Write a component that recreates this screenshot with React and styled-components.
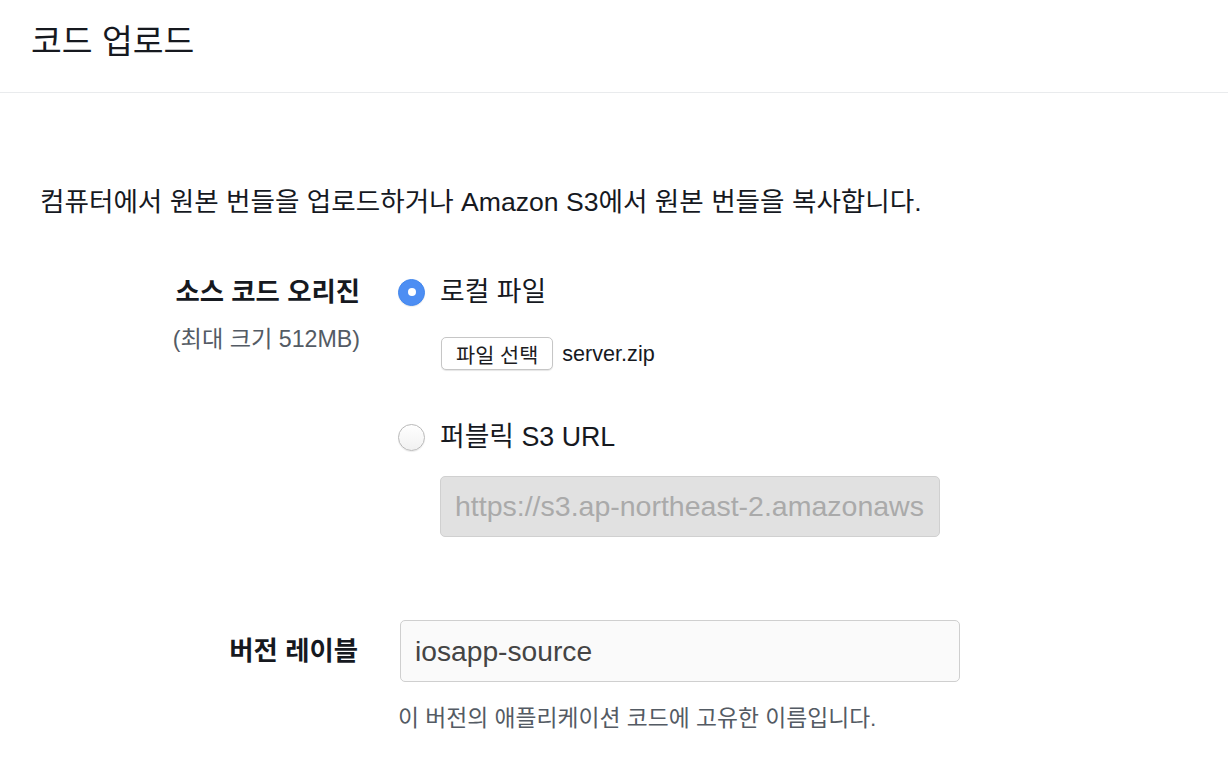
import styled, { createGlobalStyle } from "styled-components";

const GlobalStyle = createGlobalStyle`
	body {
		margin: 0;
		background: #ffffff;
		font-family: "Liberation Sans", "Noto Sans CJK KR", sans-serif;
		color: #16191f;
	}
	* {
		box-sizing: border-box;
	}
`;

const App = () => {
	return (
		<>
			<GlobalStyle />
			<Page>
				<Header>
					<Title>코드 업로드</Title>
				</Header>
				<Body>
					<Description>
						컴퓨터에서 원본 번들을 업로드하거나 Amazon S3에서 원본 번들을 복사합니다.
					</Description>

					<FieldRow>
						<LabelCol>
							<Label>소스 코드 오리진</Label>
							<SubLabel>(최대 크기 512MB)</SubLabel>
						</LabelCol>
						<Controls>
							<RadioOption>
								<Radio checked />
								<OptionText>로컬 파일</OptionText>
							</RadioOption>
							<FileRow>
								<FileButton type="button">파일 선택</FileButton>
								<FileName>server.zip</FileName>
							</FileRow>
							<RadioOption $spaced>
								<Radio />
								<OptionText>퍼블릭 S3 URL</OptionText>
							</RadioOption>
							<UrlInput
								disabled
								placeholder="https://s3.ap-northeast-2.amazonaws.com/bucket/key"
							/>
						</Controls>
					</FieldRow>

					<FieldRow $version>
						<LabelCol $center>
							<Label>버전 레이블</Label>
						</LabelCol>
						<Controls $shift>
							<TextInput defaultValue="iosapp-source" />
							<Hint>이 버전의 애플리케이션 코드에 고유한 이름입니다.</Hint>
						</Controls>
					</FieldRow>
				</Body>
			</Page>
		</>
	);
};
export default App;

const Page = styled.div`
	width: 1228px;
	min-height: 784px;
	background: #ffffff;
`;

const Header = styled.div`
	height: 93px;
	padding: 22px 31px 0;
	border-bottom: 1px solid #e9ebed;
`;

const Title = styled.h1`
	margin: 0;
	font-size: 33.5px;
	line-height: 40px;
	font-weight: 400;
	color: #16191f;
`;

const Body = styled.div`
	padding: 0 0 40px 40px;
`;

const Description = styled.p`
	margin: 91px 0 0;
	font-size: 26.6px;
	line-height: 36px;
	color: #16191f;
`;

const FieldRow = styled.div`
	display: flex;
	gap: 38px;
	margin-top: ${(p) => (p.$version ? "83px" : "54px")};
`;

const LabelCol = styled.div`
	width: 320px;
	flex-shrink: 0;
	display: flex;
	flex-direction: column;
	align-items: flex-end;
	padding-top: ${(p) => (p.$center ? "13px" : "0")};
	padding-right: ${(p) => (p.$center ? "2px" : "0")};
`;

const Label = styled.div`
	font-size: 26.4px;
	line-height: 36px;
	font-weight: 700;
	color: #16191f;
`;

const SubLabel = styled.div`
	margin-top: 14px;
	font-size: 23.2px;
	line-height: 30px;
	color: #545b64;
`;

const Controls = styled.div`
	display: flex;
	flex-direction: column;
	align-items: flex-start;
	margin-left: ${(p) => (p.$shift ? "2px" : "0")};
`;

const RadioOption = styled.label`
	display: flex;
	align-items: center;
	gap: 15px;
	height: 36px;
	margin-top: ${(p) => (p.$spaced ? "49px" : "0")};
`;

const Radio = styled.span`
	width: 27px;
	height: 27px;
	border-radius: 50%;
	position: relative;
	flex-shrink: 0;
	background: ${(p) =>
		p.checked ? "#4d8ef3" : "linear-gradient(#ffffff, #f1f1f1)"};
	border: 1px solid ${(p) => (p.checked ? "#4287ee" : "#b9b9b9")};
	box-shadow: 0 1px 1px rgba(0, 0, 0, 0.08);

	&::after {
		content: "";
		display: ${(p) => (p.checked ? "block" : "none")};
		position: absolute;
		left: 50%;
		top: 50%;
		width: 8px;
		height: 8px;
		margin: -4px 0 0 -4px;
		border-radius: 50%;
		background: #ffffff;
	}
`;

const OptionText = styled.span`
	font-size: 26.8px;
	line-height: 36px;
	color: #16191f;
`;

const FileRow = styled.div`
	display: flex;
	align-items: center;
	gap: 9px;
	margin: 27px 0 0 43px;
`;

const FileButton = styled.button`
	height: 33px;
	padding: 0 14px;
	font-family: "Liberation Sans", "Noto Sans CJK KR", sans-serif;
	font-size: 20.8px;
	color: #1d1d1f;
	background: #ffffff;
	border: 1px solid #c6c6c6;
	border-radius: 5px;
	box-shadow: 0 1px 1px rgba(0, 0, 0, 0.1);
`;

const FileName = styled.span`
	font-size: 21.6px;
	color: #16191f;
`;

const UrlInput = styled.input`
	margin: 21px 0 0 42px;
	width: 500px;
	height: 61px;
	padding: 0 15px 0 14px;
	font-family: "Liberation Sans", sans-serif;
	font-size: 28.5px;
	background: #e1e1e1;
	border: 1px solid #d0d0d0;
	border-radius: 5px;
	outline: none;

	&::placeholder {
		color: #aaaaaa;
	}
`;

const TextInput = styled.input`
	width: 560px;
	height: 62px;
	padding: 0 14px;
	font-family: "Liberation Sans", sans-serif;
	font-size: 28.2px;
	color: #444444;
	background: #fafafa;
	border: 1px solid #cfcfcf;
	border-radius: 5px;
	outline: none;
`;

const Hint = styled.div`
	margin: 21px 0 0 -2px;
	font-size: 22.8px;
	line-height: 30px;
	color: #545b64;
`;
